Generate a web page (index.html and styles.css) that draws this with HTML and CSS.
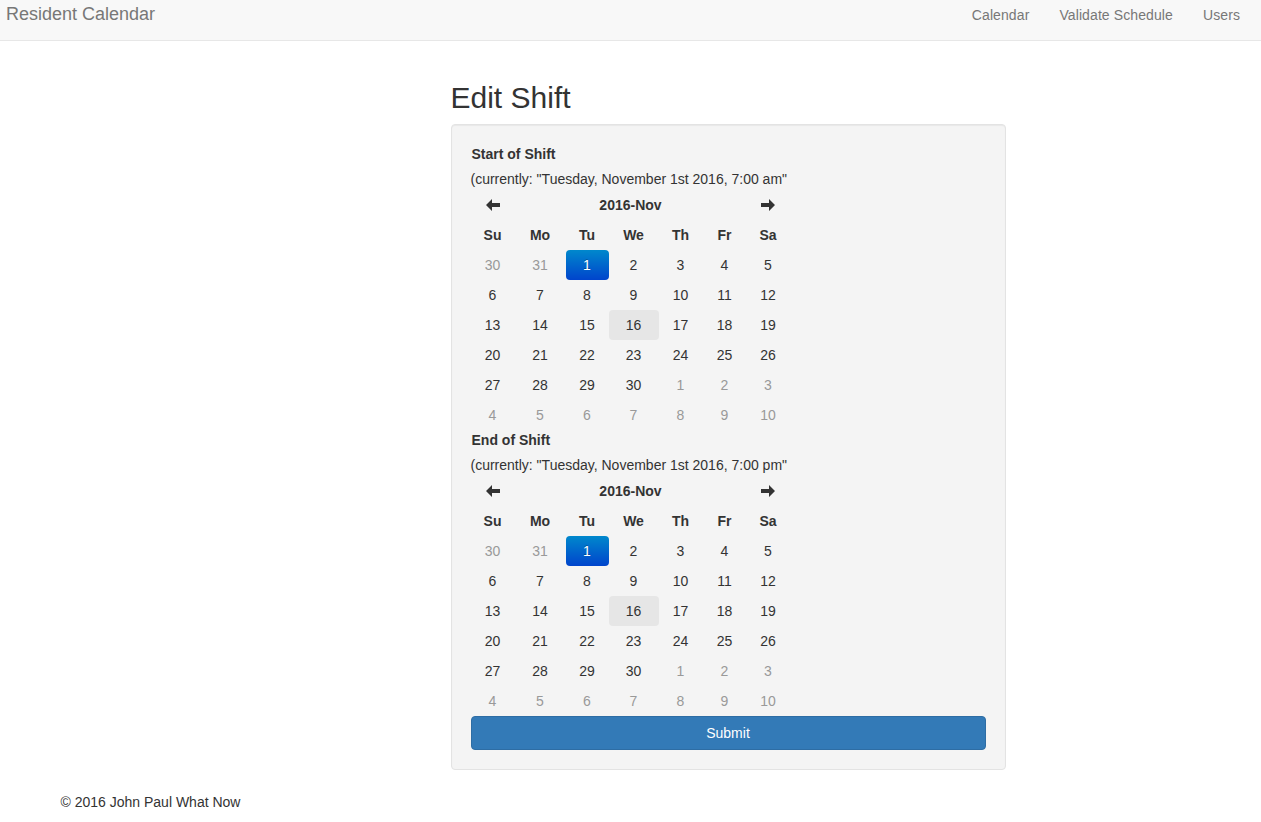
FILE: index.html
```html
<!DOCTYPE html>
<html>
<head>
<meta charset="utf-8">
<link rel="stylesheet" href="styles.css">
</head>
<body>
<nav class="navbar">
  <a class="brand">Resident Calendar</a>
  <ul class="nav">
    <li><a>Calendar</a></li>
    <li><a>Validate Schedule</a></li>
    <li><a>Users</a></li>
  </ul>
</nav>
<div class="container">
  <div class="col">
    <h2 class="title">Edit Shift</h2>
    <div class="well">
      <label class="lbl">Start of Shift</label>
      <div class="current">(currently: "Tuesday, November 1st 2016, 7:00 am"</div>
      <table class="cal">
        <colgroup><col class="c1"><col class="c2"><col class="c3"><col class="c4"><col class="c5"><col class="c6"><col class="c7"></colgroup>
        <thead>
          <tr><th><svg class="arrow" viewBox="0 0 14 12"><path d="M0 6 L6 0 V4 H14 V8 H6 V12 Z"/></svg></th><th colspan="5" class="switch">2016-Nov</th><th><svg class="arrow" viewBox="0 0 14 12"><path d="M14 6 L8 0 V4 H0 V8 H8 V12 Z"/></svg></th></tr>
          <tr class="dow"><th>Su</th><th>Mo</th><th>Tu</th><th>We</th><th>Th</th><th>Fr</th><th>Sa</th></tr>
        </thead>
        <tbody>
          <tr><td class="old">30</td><td class="old">31</td><td class="active">1</td><td>2</td><td>3</td><td>4</td><td>5</td></tr>
          <tr><td>6</td><td>7</td><td>8</td><td>9</td><td>10</td><td>11</td><td>12</td></tr>
          <tr><td>13</td><td>14</td><td>15</td><td class="today">16</td><td>17</td><td>18</td><td>19</td></tr>
          <tr><td>20</td><td>21</td><td>22</td><td>23</td><td>24</td><td>25</td><td>26</td></tr>
          <tr><td>27</td><td>28</td><td>29</td><td>30</td><td class="old">1</td><td class="old">2</td><td class="old">3</td></tr>
          <tr><td class="old">4</td><td class="old">5</td><td class="old">6</td><td class="old">7</td><td class="old">8</td><td class="old">9</td><td class="old">10</td></tr>
        </tbody>
      </table>
      <label class="lbl">End of Shift</label>
      <div class="current">(currently: "Tuesday, November 1st 2016, 7:00 pm"</div>
      <table class="cal">
        <colgroup><col class="c1"><col class="c2"><col class="c3"><col class="c4"><col class="c5"><col class="c6"><col class="c7"></colgroup>
        <thead>
          <tr><th><svg class="arrow" viewBox="0 0 14 12"><path d="M0 6 L6 0 V4 H14 V8 H6 V12 Z"/></svg></th><th colspan="5" class="switch">2016-Nov</th><th><svg class="arrow" viewBox="0 0 14 12"><path d="M14 6 L8 0 V4 H0 V8 H8 V12 Z"/></svg></th></tr>
          <tr class="dow"><th>Su</th><th>Mo</th><th>Tu</th><th>We</th><th>Th</th><th>Fr</th><th>Sa</th></tr>
        </thead>
        <tbody>
          <tr><td class="old">30</td><td class="old">31</td><td class="active">1</td><td>2</td><td>3</td><td>4</td><td>5</td></tr>
          <tr><td>6</td><td>7</td><td>8</td><td>9</td><td>10</td><td>11</td><td>12</td></tr>
          <tr><td>13</td><td>14</td><td>15</td><td class="today">16</td><td>17</td><td>18</td><td>19</td></tr>
          <tr><td>20</td><td>21</td><td>22</td><td>23</td><td>24</td><td>25</td><td>26</td></tr>
          <tr><td>27</td><td>28</td><td>29</td><td>30</td><td class="old">1</td><td class="old">2</td><td class="old">3</td></tr>
          <tr><td class="old">4</td><td class="old">5</td><td class="old">6</td><td class="old">7</td><td class="old">8</td><td class="old">9</td><td class="old">10</td></tr>
        </tbody>
      </table>
      <button class="btn">Submit</button>
    </div>
  </div>
  <footer class="footer">© 2016 John Paul What Now</footer>
</div>
</body>
</html>
```

FILE: styles.css
```css
* { box-sizing: border-box; }
html, body { margin: 0; padding: 0; }
body {
  font-family: "Liberation Sans", Arial, sans-serif;
  font-size: 14px;
  line-height: 20px;
  color: #333;
  background: #fff;
}
.navbar {
  height: 41px;
  background: #f8f8f8;
  border-bottom: 1px solid #e7e7e7;
  display: flex;
  justify-content: space-between;
  align-items: flex-start;
  margin-bottom: 20px;
}
.brand {
  font-size: 18px;
  line-height: 20px;
  color: #777;
  padding: 4px 0 0 6px;
}
.nav {
  list-style: none;
  margin: 0;
  padding: 0 6px 0 0;
  display: flex;
}
.nav a {
  display: block;
  padding: 5px 15px;
  color: #777;
  font-size: 14px;
  line-height: 20px;
  letter-spacing: 0.1px;
}
.container {
  width: 1170px;
  margin: 0 auto;
  padding: 0 15px;
  display: flow-root;
}
.col {
  width: 555px;
  margin-left: 390px;
}
.title {
  font-size: 30px;
  font-weight: 500;
  line-height: 33px;
  margin: 20px 0 10px;
  color: #333;
}
.well {
  background: #f4f4f4;
  border: 1px solid #e3e3e3;
  border-radius: 4px;
  padding: 19px;
  box-shadow: inset 0 1px 1px rgba(0,0,0,0.05);
  margin-bottom: 21px;
}
.lbl {
  display: block;
  font-weight: bold;
  font-size: 14px;
  line-height: 20px;
  margin-bottom: 5px;
  padding-left: 1px;
}
.current {
  line-height: 20px;
}
.cal {
  border-collapse: collapse;
  table-layout: fixed;
  width: 319px;
  margin-top: 1px;
}
.c1 { width: 44px; }
.c2 { width: 51px; }
.c3 { width: 43px; }
.c4 { width: 50px; }
.c5 { width: 44px; }
.c6 { width: 44px; }
.c7 { width: 43px; }
.cal th, .cal td {
  height: 30px;
  padding: 0;
  text-align: center;
  vertical-align: middle;
  font-size: 14px;
}
.cal th { font-weight: bold; }
.switch { font-size: 14px; }
.arrow {
  width: 14px;
  height: 12px;
  fill: #333;
  display: block;
  margin: 0 auto;
}
.cal td.old { color: #999; }
.cal td.active {
  color: #fff;
  background: linear-gradient(to bottom, #0088cc, #0044cc);
  border-radius: 4px;
  text-shadow: 0 -1px 0 rgba(0,0,0,0.25);
}
.cal td.today {
  background: #e6e6e6;
  border-radius: 4px;
}
.btn {
  display: block;
  width: 100%;
  height: 34px;
  background: #337ab7;
  border: 1px solid #2e6da4;
  border-radius: 4px;
  color: #fff;
  font-family: "Liberation Sans", Arial, sans-serif;
  font-size: 14px;
  line-height: 20px;
}
.footer {
  line-height: 20px;
  font-size: 14px;
  color: #333;
  padding-top: 1px;
}
```
